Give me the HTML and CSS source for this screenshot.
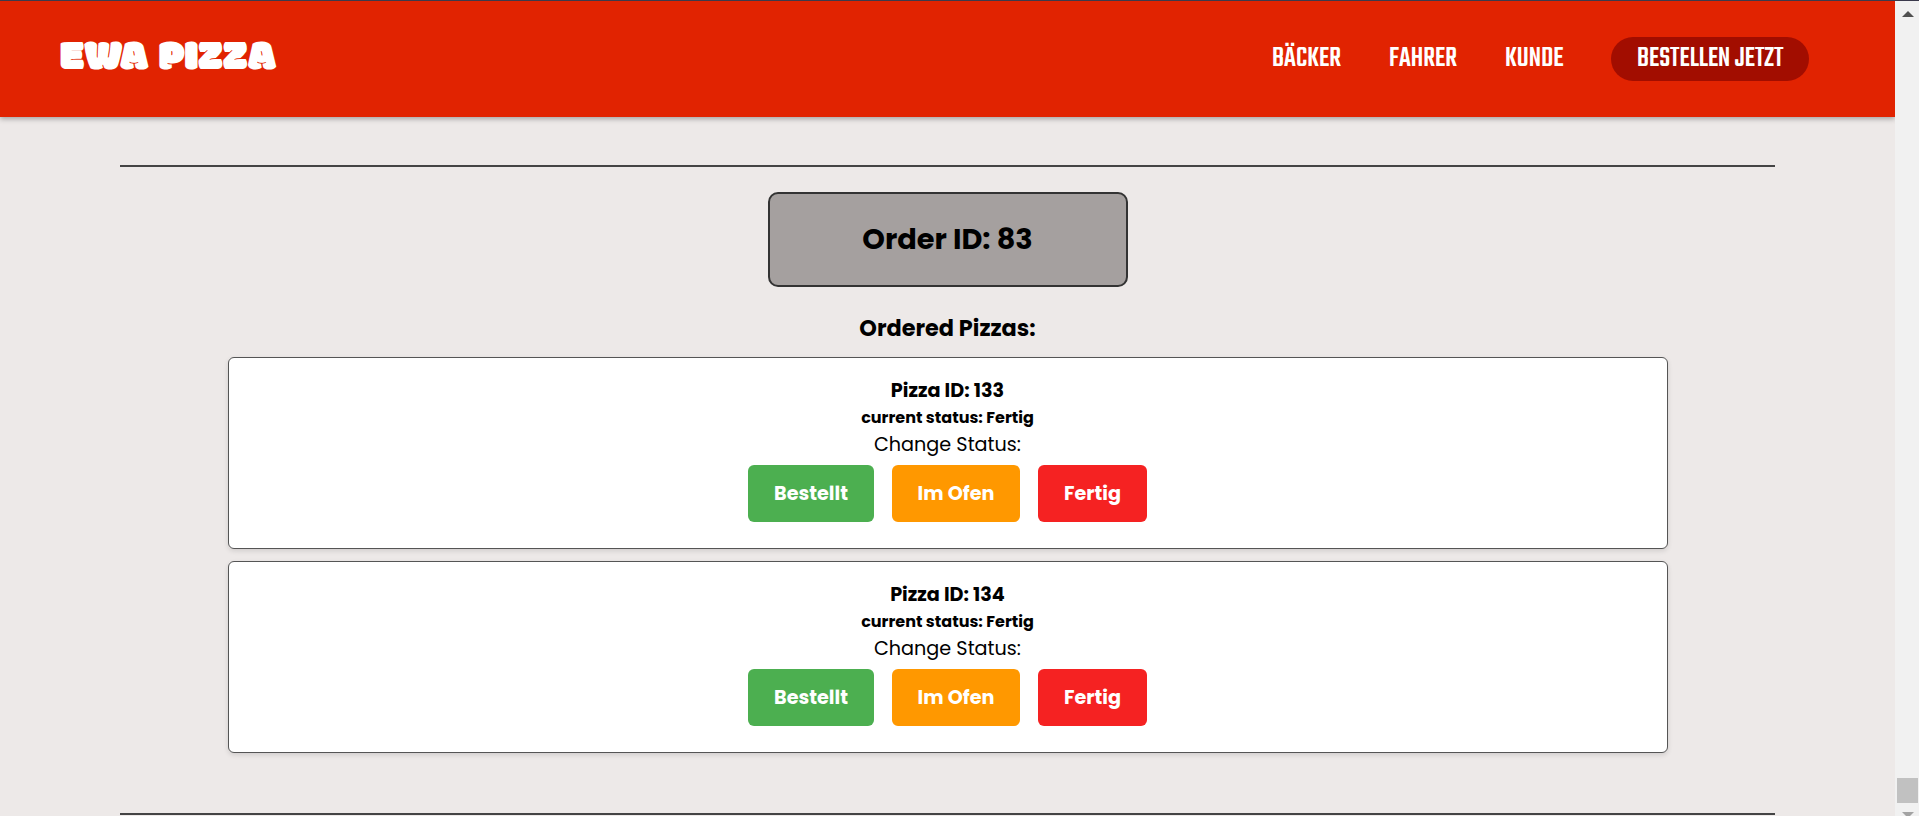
FILE: index.html
```
<!DOCTYPE html>
<html lang="de">
<head>
<meta charset="utf-8">
<title>EWA Pizza</title>
<link rel="stylesheet" href="styles.css">
</head>
<body>
<div class="page">
  <header class="header">
    <a class="logo">EWA PIZZA</a>
    <nav class="nav">
      <a class="link"><svg width="67" height="44"><text x="-1" y="29" textLength="69" lengthAdjust="spacingAndGlyphs">BÄCKER</text></svg></a>
      <a class="link"><svg width="66" height="44"><text x="-1" y="29" textLength="68" lengthAdjust="spacingAndGlyphs">FAHRER</text></svg></a>
      <a class="link"><svg width="57" height="44"><text x="-1" y="29" textLength="58.5" lengthAdjust="spacingAndGlyphs">KUNDE</text></svg></a>
      <a class="link order-now"><svg width="145" height="44"><text x="-1" y="29" textLength="146.5" lengthAdjust="spacingAndGlyphs">BESTELLEN JETZT</text></svg></a>
    </nav>
  </header>
  <main class="main">
    <hr class="rule">
    <h2 class="order-id">Order ID: 83</h2>
    <h3 class="ordered">Ordered Pizzas:</h3>
    <section class="card">
      <h4 class="pizza-id">Pizza ID: 133</h4>
      <h5 class="status">current status: Fertig</h5>
      <p class="change">Change Status:</p>
      <div class="buttons">
        <button class="btn green">Bestellt</button>
        <button class="btn orange">Im Ofen</button>
        <button class="btn red">Fertig</button>
      </div>
    </section>
    <section class="card">
      <h4 class="pizza-id">Pizza ID: 134</h4>
      <h5 class="status">current status: Fertig</h5>
      <p class="change">Change Status:</p>
      <div class="buttons">
        <button class="btn green">Bestellt</button>
        <button class="btn orange">Im Ofen</button>
        <button class="btn red">Fertig</button>
      </div>
    </section>
    <hr class="rule last">
  </main>
</div>
<aside class="scrollbar">
  <svg class="arrow" width="12" height="6"><path d="M0 6L6 0L12 6Z" fill="#505050"/></svg>
  <div class="thumb"></div>
  <svg class="arrow down" width="12" height="6"><path d="M0 0H12L6 6Z" fill="#a3a3a3"/></svg>
</aside>
</body>
</html>
```
FILE: styles.css
```
* { box-sizing: border-box; margin: 0; padding: 0; }
body {
  display: flex;
  height: 816px;
  overflow: hidden;
  border-top: 1px solid #3b3a4c;
  background: #ede9e8;
  color: #000;
  font-family: Poppins, Inter, sans-serif;
}
.page { width: 1895px; }
.header {
  display: flex;
  align-items: center;
  justify-content: space-between;
  height: 116px;
  padding: 0 86px 0 60px;
  background: #e12301;
  box-shadow: 0 2px 5px rgba(0, 0, 0, .3);
}
.logo {
  color: #fff;
  font: 400 43.4px/70px Modak, Roboto, sans-serif;
}
.nav { display: flex; gap: 50px; }
.link { display: flex; height: 44px; }
.link svg { overflow: visible; }
.link text { font: 500 30px Teko, Roboto, sans-serif; fill: #fff; }
.link.order-now {
  margin-left: -2px;
  padding: 0 26px 0 27px;
  border-radius: 22px;
  background: #a20d00;
}
.main {
  display: flex;
  flex-direction: column;
  align-items: center;
  padding-top: 48px;
}
.rule { width: 1655px; height: 2px; border: 0; background: #444; }
.order-id {
  width: 360px;
  height: 95px;
  margin-top: 25px;
  border: 2px solid #333;
  border-radius: 10px;
  background: #a5a09f;
  font-size: 28.8px;
  line-height: 91px;
  text-align: center;
}
.ordered { margin-top: 24px; height: 34px; font-size: 22.4px; line-height: 34px; }
.card {
  display: flex;
  flex-direction: column;
  align-items: center;
  width: 1440px;
  height: 192px;
  margin-top: 12px;
  padding-top: 19px;
  border: 1px solid #555;
  border-radius: 6px;
  background: #fff;
  box-shadow: 0 2px 5px rgba(0, 0, 0, .12);
}
.pizza-id { font-size: 19.2px; line-height: 28px; }
.status { font-size: 16px; line-height: 26px; }
.change { font-size: 19.2px; font-weight: 400; line-height: 28px; }
.buttons { display: flex; gap: 18px; margin-top: 6px; }
.btn {
  height: 57px;
  border: 0;
  border-radius: 6px;
  color: #fff;
  font: 700 19.2px Poppins, Inter, sans-serif;
}
.green { width: 126px; background: #4caf50; }
.orange { width: 128px; background: #ff9800; }
.red { width: 109px; background: #f52222; }
.last { margin-top: 60px; }
.scrollbar {
  display: flex;
  flex-direction: column;
  align-items: center;
  width: 24px;
  padding: 10px 0 0 1px;
  background: #f1f1f1;
}
.arrow { flex: none; }
.thumb { width: 21px; height: 25px; margin-top: 761px; background: #c1c1c1; flex: none; }
.down { margin-top: 9px; }
```
